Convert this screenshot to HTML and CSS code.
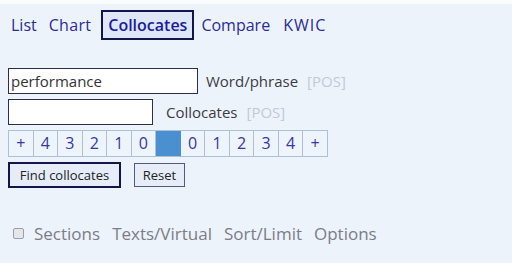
FILE: index.html
```html
<!DOCTYPE html>
<html>
<head>
<meta charset="utf-8">
<link rel="stylesheet" href="styles.css">
</head>
<body>
<div class="page">
  <nav class="nav">
    <a class="nav-link">List</a>
    <a class="nav-link">Chart</a>
    <a class="nav-link active">Collocates</a>
    <a class="nav-link">Compare</a>
    <a class="nav-link kwic">KWIC</a>
  </nav>
  <div class="form">
    <div class="row">
      <input class="field field-word" type="text" value="performance">
      <span class="label">Word/phrase</span>
      <span class="pos">[POS]</span>
    </div>
    <div class="row">
      <input class="field field-coll" type="text" value="">
      <span class="label label-coll">Collocates</span>
      <span class="pos">[POS]</span>
    </div>
    <div class="span">
      <div class="cell">+</div>
      <div class="cell">4</div>
      <div class="cell">3</div>
      <div class="cell">2</div>
      <div class="cell">1</div>
      <div class="cell">0</div>
      <div class="cell node"></div>
      <div class="cell">0</div>
      <div class="cell">1</div>
      <div class="cell">2</div>
      <div class="cell">3</div>
      <div class="cell">4</div>
      <div class="cell">+</div>
    </div>
    <div class="buttons">
      <button class="btn btn-primary">Find collocates</button>
      <button class="btn">Reset</button>
    </div>
  </div>
  <div class="options">
    <span class="check"></span>
    <span class="opt">Sections</span>
    <span class="opt">Texts/Virtual</span>
    <span class="opt">Sort/Limit</span>
    <span class="opt">Options</span>
  </div>
</div>
</body>
</html>
```
FILE: styles.css
```css
html, body {
  margin: 0;
  padding: 0;
}
body {
  background: #edf3fb;
  font-family: "Open Sans", "Noto Sans", sans-serif;
  border-top: 4px solid #fbfcfe;
  height: 259px;
  overflow: hidden;
}
.page {
  padding-left: 8px;
}
.nav {
  display: flex;
  align-items: center;
  height: 30px;
  margin-top: 6px;
  padding-left: 3px;
  gap: 10px;
}
.nav-link {
  font-size: 16px;
  color: #2c2c98;
  line-height: 22px;
}
.nav-link:nth-child(2) {
  margin-left: 2px;
  letter-spacing: 0.3px;
}
.nav-link.active {
  font-weight: 600;
  color: #1b1c9a;
  background: #dee7f8;
  border: 2px solid #14164a;
  padding: 2px 5px 2px 5px;
  margin-right: -3px;
}
.kwic {
  margin-left: 3px;
  letter-spacing: 1px;
}
.form {
  margin-top: 28px;
  display: flex;
  flex-direction: column;
}
.row {
  display: flex;
  align-items: center;
  height: 26px;
  margin-bottom: 5px;
}
.field {
  box-sizing: border-box;
  height: 26px;
  margin: 0;
  border: 1px solid #2d2d4f;
  background: #fff;
  font-family: "Open Sans", "Noto Sans", sans-serif;
  font-size: 15px;
  color: #333;
  padding: 0 2px;
  outline: none;
}
.field-word {
  width: 190px;
}
.field-coll {
  width: 145px;
}
.label {
  font-size: 15px;
  color: #3b3b45;
  margin-left: 8px;
}
.label-coll {
  margin-left: 13px;
}
.pos {
  font-size: 15px;
  color: #c3c9d5;
  margin-left: 9px;
}
.span {
  display: flex;
  width: 320px;
  height: 27px;
  box-sizing: border-box;
  border-top: 1px solid #aebfd6;
  border-left: 1px solid #aebfd6;
}
.cell {
  flex: 1;
  box-sizing: border-box;
  border-right: 1px solid #aebfd6;
  border-bottom: 1px solid #aebfd6;
  background: #eef4fc;
  color: #3636a6;
  font-size: 16px;
  line-height: 25px;
  text-align: center;
}
.node {
  background: #4a8fd0;
  border-right-color: #4a8fd0;
}
.buttons {
  display: flex;
  align-items: center;
  margin-top: 5px;
  gap: 13px;
}
.btn {
  box-sizing: border-box;
  font-family: "Open Sans", "Noto Sans", sans-serif;
  font-size: 13px;
  color: #222;
  background: #e6edf8;
  border: 1px solid #555a7a;
  height: 24px;
  width: 51px;
  padding: 0;
  margin: 0;
}
.btn-primary {
  height: 26px;
  width: 113px;
  border: 2px solid #14164a;
}
.options {
  display: flex;
  align-items: center;
  margin-top: 34px;
  padding-left: 5px;
  gap: 12px;
}
.check {
  width: 9px;
  height: 9px;
  border: 1px solid #9aa0aa;
  border-radius: 2px;
  background: #e4e6ea;
  margin-right: -2px;
}
.opt {
  font-size: 17px;
  color: #7b7d85;
}
```
